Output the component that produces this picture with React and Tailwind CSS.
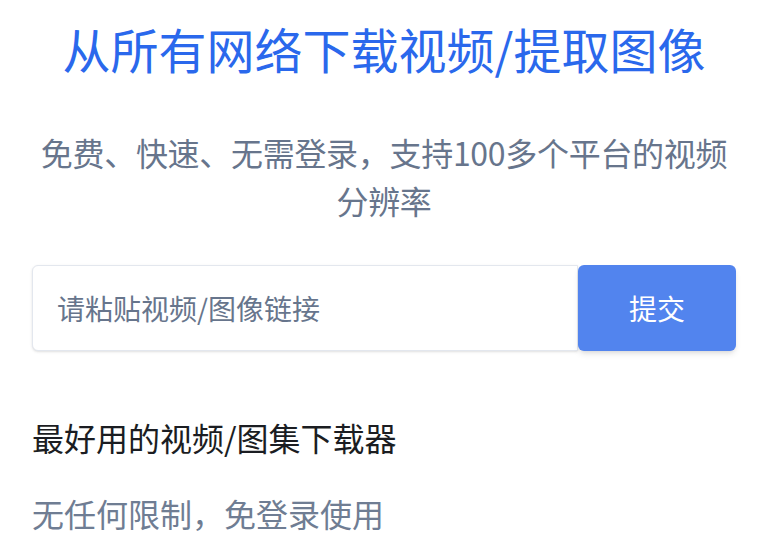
import React from 'react'

export default function App() {
  return (
    <div
      className="min-h-screen bg-white px-8 pt-3 text-center"
      style={{ fontFamily: '"Noto Sans CJK SC", "Noto Sans", sans-serif' }}
    >
      {/* --- HERO --- */}
      <h1 className="text-[48px] leading-[72px] font-normal text-[#2a68ec]">
        从所有网络下载视频/提取图像
      </h1>
      <p className="mt-11 text-[32px] leading-[48px] text-[#67758c] tracking-[-0.3px]">
        免费、快速、无需登录，支持100多个平台的视频分辨率
      </p>

      {/* --- URL INPUT --- */}
      <form className="mt-[41px] flex h-[86px]" onSubmit={(e) => e.preventDefault()}>
        <input
          type="text"
          placeholder="请粘贴视频/图像链接"
          className="flex-1 min-w-0 rounded-l-md border border-[#e3e7ee] bg-white px-6 text-[28px] text-gray-800 shadow-sm outline-none placeholder:text-[#67758c]"
        />
        <button
          type="submit"
          className="w-[158px] rounded-md bg-[#5284ee] text-[28px] text-white shadow-md"
        >
          提交
        </button>
      </form>

      {/* --- FEATURES --- */}
      <div className="mt-[62px] text-left">
        <h2 className="text-[32px] leading-[48px] font-normal text-[#1b1d22]">
          最好用的视频/图集下载器
        </h2>
        <p className="mt-[28px] text-[32px] leading-[48px] text-[#6f7d93]">
          无任何限制，免登录使用
        </p>
      </div>
    </div>
  )
}
